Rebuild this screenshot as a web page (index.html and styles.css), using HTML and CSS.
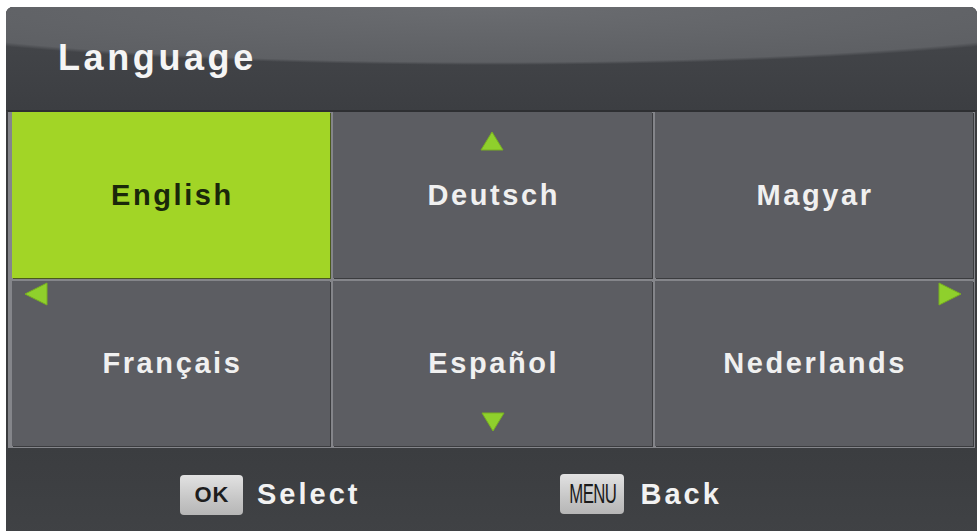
FILE: index.html
```html
<!DOCTYPE html>
<html>
<head>
<meta charset="utf-8">
<link rel="stylesheet" href="styles.css">
</head>
<body>
<div class="panel">
  <div class="header"><h1 class="title">Language</h1></div>
  <div class="grid">
    <div class="cell active"><span class="label">English</span></div>
    <div class="cell">
      <svg class="arrow arrow-up" viewBox="0 0 24 20"><polygon points="12,1 23,19 1,19"/></svg>
      <span class="label">Deutsch</span>
    </div>
    <div class="cell"><span class="label">Magyar</span></div>
    <div class="cell">
      <svg class="arrow arrow-left" viewBox="0 0 24 24"><polygon points="1,12 23,1 23,23"/></svg>
      <span class="label">Français</span>
    </div>
    <div class="cell">
      <span class="label">Español</span>
      <svg class="arrow arrow-down" viewBox="0 0 24 20"><polygon points="1,1 23,1 12,19"/></svg>
    </div>
    <div class="cell">
      <svg class="arrow arrow-right" viewBox="0 0 24 24"><polygon points="1,1 23,12 1,23"/></svg>
      <span class="label">Nederlands</span>
    </div>
  </div>
  <div class="footer">
    <div class="hint"><span class="key key-ok">OK</span><span class="hint-text">Select</span></div>
    <div class="hint"><span class="key key-menu"><span class="menu-txt">MENU</span></span><span class="hint-text">Back</span></div>
  </div>
</div>
</body>
</html>
```

FILE: styles.css
```css
html, body {
  margin: 0;
  padding: 0;
  background: #ffffff;
  overflow: hidden;
  height: 531px;
}
body {
  font-family: "Liberation Sans", Arial, sans-serif;
}
.panel {
  margin: 7px 1px 0 6px;
  width: 971px;
  background: #2e2f32;
  border-radius: 7px 7px 0 6px;
  overflow: hidden;
}
.header {
  height: 103px;
  box-sizing: border-box;
  padding: 31px 0 0 52px;
  background:
    radial-gradient(663px 58px at 50% 0, #6a6c70 0%, #5e6064 95%, rgba(94,96,100,0) 100%),
    linear-gradient(#46484c, #3c3e42);
}
.title {
  margin: 0;
  font-size: 36px;
  line-height: 40px;
  font-weight: bold;
  letter-spacing: 3.6px;
  color: #f5f5f5;
}
.grid {
  display: grid;
  grid-template-columns: 1fr 1fr 1fr;
  grid-template-rows: 166px 165px;
  gap: 3px;
  padding: 0 2px 2px 4px;
  border-top: 2px solid #2e2f32;
  border-left: 2px solid #3a3b3e;
  border-right: 2px solid #3a3b3e;
  background: #84858a;
}
.cell {
  position: relative;
  background: #5c5d62;
  box-shadow: 1px 1px 0 #3b3c3f;
  display: flex;
  align-items: center;
  justify-content: center;
}
.cell.active {
  background: #a2d526;
  box-shadow: 1px 1px 0 #4a5a1c;
}
.label {
  font-size: 29px;
  font-weight: bold;
  letter-spacing: 2.6px;
  color: #f0f0f0;
  margin-right: -2.6px;
}
.active .label {
  color: #1a280a;
}
.arrow {
  position: absolute;
  fill: #8fd02c;
  stroke: #78b020;
  stroke-width: 1;
}
.arrow-up {
  width: 24px;
  height: 20px;
  top: 19px;
  left: 50%;
  margin-left: -12px;
}
.arrow-down {
  width: 24px;
  height: 20px;
  bottom: 14px;
  left: 50%;
  margin-left: -11px;
}
.arrow-left {
  width: 24px;
  height: 24px;
  top: 1px;
  left: 12px;
}
.arrow-right {
  width: 24px;
  height: 24px;
  top: 1px;
  right: 11px;
}
.footer {
  height: 90px;
  background: linear-gradient(#3b3d40, #404245);
  display: flex;
  align-items: center;
  padding: 0 0 0 174px;
  gap: 200px;
  box-sizing: border-box;
}
.hint {
  display: flex;
  align-items: center;
  margin-top: 3px;
}
.key {
  display: flex;
  align-items: center;
  justify-content: center;
  width: 63px;
  height: 40px;
  border-radius: 4px;
  background: linear-gradient(#e2e2e2, #c6c6c6 60%, #b6b6b6);
  color: #1d1d1d;
  font-weight: bold;
  box-sizing: border-box;
  overflow: hidden;
}
.key-ok {
  font-size: 22px;
  letter-spacing: 1px;
  padding-left: 1px;
}
.key-menu {
  width: 64px;
  margin-top: -1px;
}
.menu-txt {
  display: inline-block;
  font-size: 27px;
  font-weight: normal;
  letter-spacing: -1px;
  transform: scaleX(0.62);
  color: #1a1a1a;
}
.hint-text {
  margin-left: 14px;
  font-size: 29px;
  font-weight: bold;
  letter-spacing: 3px;
  color: #f2f2f2;
}
.key-menu + .hint-text {
  margin-left: 16px;
}
```
